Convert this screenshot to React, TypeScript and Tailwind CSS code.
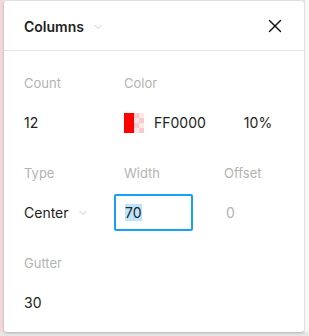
import { X, ChevronDown } from "lucide-react";

function Label({ text }: { text: string }) {
  return <p className="text-[13px] text-[#b3b3b3] leading-4">{text}</p>;
}

export default function App() {
  return (
    <div
      className="flex h-[336px] w-[309px] bg-[#e8e8e8]"
      style={{ fontFamily: "Inter, 'Noto Sans', sans-serif" }}
    >
      <div className="w-[4px] h-[332px] bg-[#f3dada]" />
      <div className="flex flex-col w-[300px] h-[331px] mt-[1px] bg-white rounded-[3px] shadow-[0_1px_3px_rgba(0,0,0,0.25)]">
        <div className="flex items-center justify-between h-[50px] pl-5 pr-[18px] border-b border-[#e5e5e5]">
          <div className="flex items-center gap-[8px] pt-[2px]">
            <span className="text-[14px] font-semibold text-[#222]">Columns</span>
            <ChevronDown size={12} strokeWidth={1.5} className="text-[#b3b3b3]" />
          </div>
          <X size={22} strokeWidth={1.5} className="text-[#111]" />
        </div>

        <div className="grid grid-cols-[100px_100px_1fr] items-center pl-5 pt-[24px] gap-y-[22px]">
          <Label text="Count" />
          <Label text="Color" />
          <div />
          <p className="text-[14px] text-[#222] leading-4">12</p>
          <div className="flex items-center col-span-2">
            <div className="flex w-5 h-5">
              <div className="w-[10px] h-5 bg-[#ff0000]" />
              <div className="w-[10px] h-5 bg-[#ffe6e6] grid grid-cols-2 grid-rows-4">
                <div className="bg-[#f5cccc]" />
                <div />
                <div />
                <div className="bg-[#f5cccc]" />
                <div className="bg-[#f5cccc]" />
                <div />
                <div />
                <div className="bg-[#f5cccc]" />
              </div>
            </div>
            <span className="ml-[10px] text-[14px] text-[#222] leading-4">FF0000</span>
            <span className="ml-[38px] text-[14px] text-[#222] leading-4">10%</span>
          </div>
        </div>

        <div className="grid grid-cols-[100px_100px_1fr] pl-5 pt-[32px]">
          <Label text="Type" />
          <Label text="Width" />
          <Label text="Offset" />
          <div className="flex items-center gap-[8px] mt-[13px] h-[37px]">
            <span className="text-[14px] text-[#222]">Center</span>
            <ChevronDown size={12} strokeWidth={1.5} className="text-[#b3b3b3]" />
          </div>
          <div className="mt-[13px] -ml-[10px] w-[79px] h-[37px] border-2 border-[#18a0fb] rounded-[2px] flex items-center pl-[9px]">
            <span className="text-[14px] text-[#222] bg-[#bde3fd] leading-[17px]">70</span>
          </div>
          <div className="flex items-center mt-[13px] h-[37px] pl-[2px]">
            <span className="text-[14px] text-[#b3b3b3]">0</span>
          </div>
        </div>

        <div className="flex flex-col pl-5 pt-[24px] gap-[24px]">
          <Label text="Gutter" />
          <p className="text-[14px] text-[#222] leading-4">30</p>
        </div>
      </div>
      <div className="flex-1 h-[332px] bg-[#f7f7f7] border-l border-[#e0e0e0]" />
    </div>
  );
}
